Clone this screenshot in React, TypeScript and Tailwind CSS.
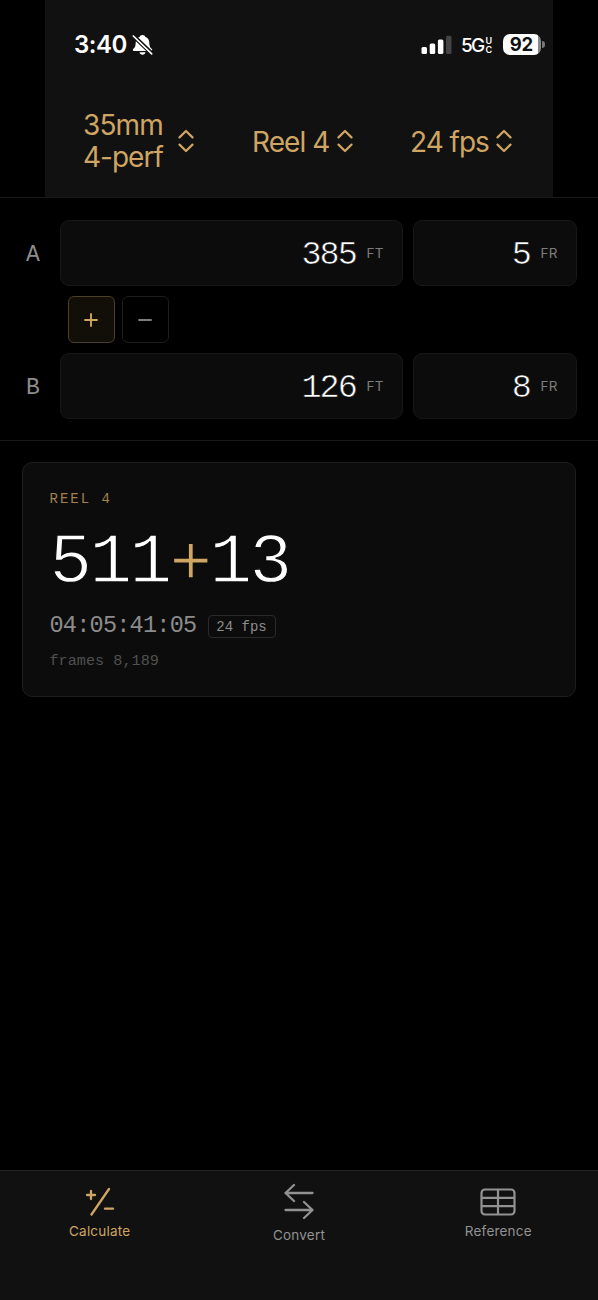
import type { ReactNode } from "react";

const mono = "font-['Liberation_Mono',monospace]";

function Chevrons() {
  return (
    <svg width="16" height="24" viewBox="0 0 16 24" fill="none" stroke="#cfa563" strokeWidth="2.200" strokeLinecap="round" strokeLinejoin="round">
      <path d="M1.500 8.400 8 2l6.500 6.400M1.500 15.600 8 22l6.500-6.400" />
    </svg>
  );
}

function BellOff() {
  return (
    <svg width="21" height="22" viewBox="0 0 21 22">
      <path d="M10.500 .9c1.600 0 2.500.8 2.700 1.800 2.800 1 4 3.300 4.100 6 .1 3.600.8 4.700 2.600 6.300.7.8.3 1.900-.8 1.900H1.900c-1.100 0-1.500-1.100-.8-1.900C2.900 13.400 3.600 12.300 3.700 8.700c.1-2.700 1.300-5 4.100-6 .2-1 1.100-1.800 2.700-1.800ZM7.500 18.300h6c-.3 1.500-1.400 2.500-3 2.500s-2.700-1-3-2.500Z" fill="#fff" />
      <path d="M1 1.500 20 19.800" stroke="#111" strokeWidth="4.200" />
      <path d="M1.300 2 19.700 19.800" stroke="#fff" strokeWidth="1.700" strokeLinecap="round" />
    </svg>
  );
}

function StatusBar() {
  return (
    <div className="flex h-[89px] items-center pl-[29px] pr-[8px]">
      <span className="text-[24px] font-semibold leading-none tracking-[-0.500px] text-white">3:40</span>
      <span className="ml-[5px]"><BellOff /></span>
      <svg className="ml-auto" width="31" height="20" viewBox="0 0 31 20">
        <rect x="0.500" y="12" width="5.500" height="7" rx="1.500" fill="#fff" />
        <rect x="8.700" y="8.500" width="5.500" height="10.500" rx="1.500" fill="#fff" />
        <rect x="16.900" y="4.500" width="5.500" height="14.500" rx="1.500" fill="#fff" />
        <rect x="25" y="0.700" width="5.500" height="18.300" rx="1.500" fill="#444" />
      </svg>
      <span className="ml-[9px] mt-px w-[24.500px] text-[19px] font-medium leading-none tracking-[-1.700px] text-white">5G</span>
      <span className="mt-px flex w-[8px] flex-col text-[9px] font-semibold leading-[9px] text-white">
        <span>U</span>
        <span>C</span>
      </span>
      <span className="ml-[9px] flex h-[21px] w-[38.500px] items-center justify-center overflow-hidden rounded-[7px] bg-[linear-gradient(90deg,#fff_92%,#888_92%)] pr-px text-[18.500px] font-bold leading-none tracking-[-0.400px] text-[#111]">92</span>
      <span className="ml-[1px] h-[7px] w-[3px] rounded-r-full bg-[#777]" />
    </div>
  );
}

function Header() {
  return (
    <header className="h-[198px] border-b border-[#191919]">
      <div className="mx-[45px] h-[197px] bg-[#111]">
        <StatusBar />
        <div className="flex h-[104px] items-center pl-[38px] text-[28px] leading-[32px] text-[#cfa563]">
          <div className="flex w-[169px] items-center">
            <span className="w-[95px]">
              <span className="block tracking-[-0.850px]">35mm</span>
              <span className="block tracking-[-1px]">4-perf</span>
            </span>
            <Chevrons />
          </div>
          <div className="flex w-[158px] items-center">
            <span className="w-[85px] whitespace-nowrap pt-px tracking-[-0.950px]">Reel 4</span>
            <Chevrons />
          </div>
          <div className="flex items-center">
            <span className="w-[86px] whitespace-nowrap pt-px tracking-[-1px]">24 fps</span>
            <Chevrons />
          </div>
        </div>
      </div>
    </header>
  );
}

function Field({ value, unit, width }: { value: string; unit: string; width: string }) {
  return (
    <div className={`${width} ${mono} flex h-[66px] items-center justify-end rounded-[9px] border border-[#171717] bg-[#0c0c0c]`}>
      <span className="mt-[5px] text-[33.500px] leading-none tracking-[-1.900px] text-white [-webkit-text-stroke:0.600px_#0c0c0c]">{value}</span>
      <span className="ml-[10.500px] mt-px w-[35.500px] font-['Inter',sans-serif] text-[13.500px] leading-none tracking-[0.300px] text-[#7c7c7c]">{unit}</span>
    </div>
  );
}

function Row({ label, feet, frames }: { label: string; feet: string; frames: string }) {
  return (
    <div className="flex items-center pl-[26px] pr-[21px]">
      <span className={`${mono} w-[34px] pt-[4px] text-[23px] leading-none text-[#8c8c8c]`}>{label}</span>
      <Field value={feet} unit="FT" width="w-[343px]" />
      <span className="w-[10px]" />
      <Field value={frames} unit="FR" width="w-[164px]" />
    </div>
  );
}

function Tab({ label, color, gap, children }: { label: string; color: string; gap: string; children: ReactNode }) {
  return (
    <div className={`${color} ${gap} flex flex-1 flex-col items-center`}>
      {children}
      <span className="text-[13.500px] leading-[18px] tracking-[0.200px]">{label}</span>
    </div>
  );
}

export default function App() {
  return (
    <div className="flex h-[1300px] w-[598px] flex-col bg-black font-['Inter',sans-serif]">
      <Header />
      <section className="h-[243px] border-b border-[#191919] pt-[22px]">
        <Row label="A" feet="385" frames="5" />
        <div className="flex h-[67px] items-center gap-[7px] pl-[67.500px]">
          <div className="flex size-[47px] items-center justify-center rounded-[6px] border border-[#4c3f29] bg-[#120e08]">
            <svg width="14" height="14" viewBox="0 0 14 14" stroke="#cfa563" strokeWidth="1.900"><path d="M7 .3v13.400M.3 7h13.400" /></svg>
          </div>
          <div className="flex size-[47px] items-center justify-center rounded-[6px] border border-[#1d1d1d]">
            <svg width="14" height="14" viewBox="0 0 14 14" stroke="#858585" strokeWidth="1.900"><path d="M.3 7h13.400" /></svg>
          </div>
        </div>
        <Row label="B" feet="126" frames="8" />
      </section>
      <main className="flex-1 px-[22px] pt-[21px]">
        <section className={`${mono} h-[235px] rounded-[10px] border border-[#1d1d1d] bg-[#0c0c0c] pl-[26.500px] pt-[28px]`}>
          <div className="h-[16px] text-[14px] leading-[16px] tracking-[2px] text-[#a18150]">REEL 4</div>
          <div className="mt-[20px] h-[72px] whitespace-nowrap text-[71px] leading-[72px] tracking-[-2.600px] text-white [-webkit-text-stroke:1.300px_#0c0c0c]">
            511<span className="relative top-[2px] text-[#cfa563]">+</span>13
          </div>
          <div className="mt-[13px] flex h-[28px] items-center">
            <span className="w-[158px] text-[23.500px] leading-[28px] tracking-[-0.750px] text-[#8c8c8c]">04:05:41:05</span>
            <span className="mt-px flex h-[23px] w-[68px] items-center justify-center rounded-[4px] border border-[#2a2a2a] pt-px text-[14px] leading-none text-[#8c8c8c]">24 fps</span>
          </div>
          <div className="mt-[11px] text-[15.200px] leading-[20px] text-[#505050]">frames 8,189</div>
        </section>
      </main>
      <nav className="flex h-[130px] border-t border-[#242424] bg-[#111]">
        <Tab label="Calculate" color="text-[#cfa563]" gap="pt-[16px]">
          <svg className="mb-[6px]" width="30" height="29" viewBox="0 0 30 29" stroke="currentColor" strokeWidth="2.300" strokeLinecap="round" fill="none">
            <path d="M2 8h8M6 4v8M24 2 6.500 27.500M20 21.700h8" />
          </svg>
        </Tab>
        <Tab label="Convert" color="text-[#929292]" gap="pt-[12px]">
          <svg className="mb-[7px]" width="30" height="36" viewBox="0 0 30 36" stroke="currentColor" strokeWidth="2.300" strokeLinecap="round" strokeLinejoin="round" fill="none">
            <path d="M28.500 10H1.500M10 2 1.500 10 10 18M1.500 27h27M20 19l8.500 8-8.500 8" />
          </svg>
        </Tab>
        <Tab label="Reference" color="text-[#929292]" gap="pt-[17px]">
          <svg className="mb-[6px]" width="36" height="28" viewBox="0 0 36 28" stroke="currentColor" strokeWidth="2.200" fill="none">
            <rect x="1.500" y="1.500" width="33" height="25" rx="3.500" />
            <path d="M18 1.500v25M1.500 9.800h33M1.500 18.200h33" />
          </svg>
        </Tab>
      </nav>
    </div>
  );
}
